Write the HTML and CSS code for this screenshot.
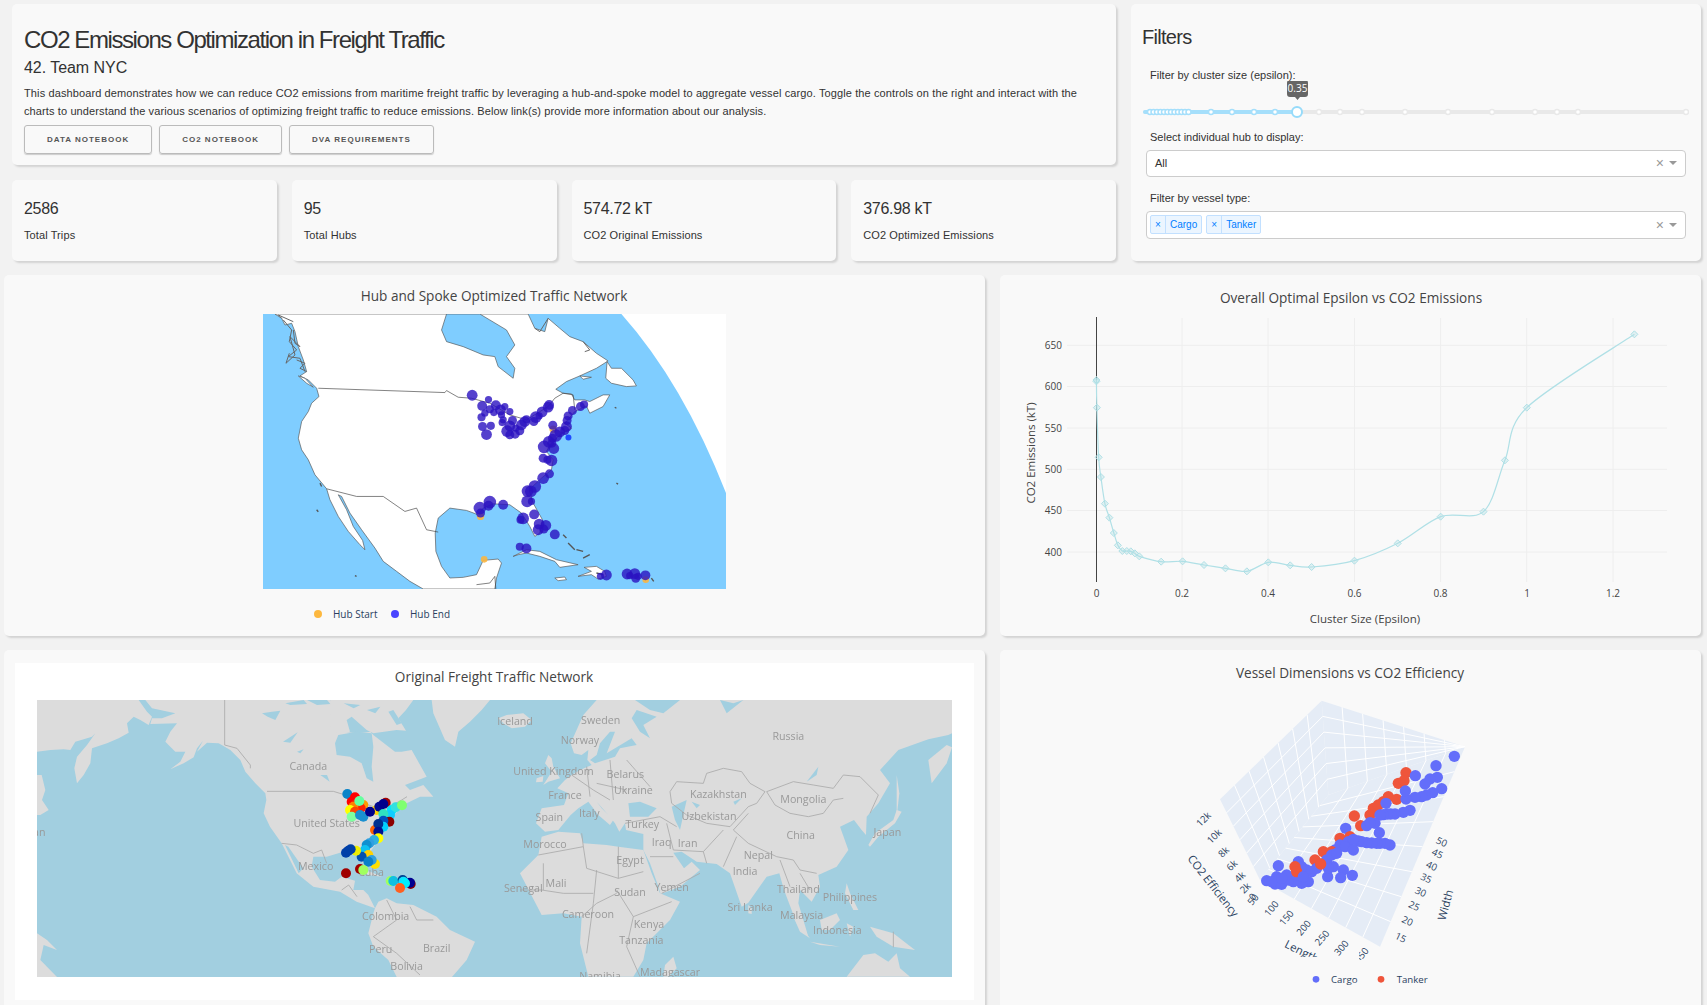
FILE: index.html
```html
<!DOCTYPE html>
<html lang="en">
<head>
  <meta charset="UTF-8">
  <title>CO2 Emissions Optimization in Freight Traffic</title>
  <link rel="stylesheet" href="styles.css">
</head>
<body>
<div class="page">

  <div class="top-row">
    <div class="top-left">
      <div class="card intro">
        <h1>CO2 Emissions Optimization in Freight Traffic</h1>
        <h2>42. Team NYC</h2>
        <p>This dashboard demonstrates how we can reduce CO2 emissions from maritime freight traffic by leveraging a hub-and-spoke model to aggregate vessel cargo. Toggle the controls on the right and interact with the charts to understand the various scenarios of optimizing freight traffic to reduce emissions. Below link(s) provide more information about our analysis.</p>
        <div class="links">
          <a class="btn">Data Notebook</a>
          <a class="btn">CO2 Notebook</a>
          <a class="btn">DVA Requirements</a>
        </div>
      </div>
      <div class="stats">
        <div class="card stat"><div class="stat-num">2586</div><div class="stat-label">Total Trips</div></div>
        <div class="card stat"><div class="stat-num">95</div><div class="stat-label">Total Hubs</div></div>
        <div class="card stat"><div class="stat-num">574.72 kT</div><div class="stat-label">CO2 Original Emissions</div></div>
        <div class="card stat"><div class="stat-num">376.98 kT</div><div class="stat-label">CO2 Optimized Emissions</div></div>
      </div>
    </div>

    <div class="card filters">
      <h3>Filters</h3>
      <label class="filter-label">Filter by cluster size (epsilon):</label>
      <svg class="slider" id="slider" width="546" height="50" viewBox="1143 80 546 50">
        <rect x="1143" y="109" width="546" height="4" rx="2" class="rail"/>
        <rect x="1143" y="109" width="154" height="4" rx="2" class="rail-on"/>
        <g id="sliderMarks"></g>
        <circle cx="1297" cy="111" r="5" class="handle"/>
        <path d="M1290 79h15q3 0 3 3v11q0 3-3 3h-5l-2.500 3-2.500-3h-5q-3 0-3-3v-11q0-3 3-3z" class="tip"/>
        <text x="1297.500" y="91" class="tip-text">0.35</text>
      </svg>
      <label class="filter-label">Select individual hub to display:</label>
      <div class="select">
        <span class="select-value">All</span>
        <span class="select-clear">×</span><span class="select-caret"></span>
      </div>
      <label class="filter-label">Filter by vessel type:</label>
      <div class="select multi">
        <span class="tag"><i>×</i><b>Cargo</b></span>
        <span class="tag"><i>×</i><b>Tanker</b></span>
        <span class="select-value"></span>
        <span class="select-clear">×</span><span class="select-caret"></span>
      </div>
    </div>
  </div>

  <div class="chart-row">
    <div class="card chart">
      <svg width="981" height="361" viewBox="0 0 981 361">
        <text x="490" y="26" class="chart-title">Hub and Spoke Optimized Traffic Network</text>
        <svg x="259" y="39" width="463" height="275" viewBox="39 42 1390 826" preserveAspectRatio="none">
          <rect x="39" y="42" width="1390" height="826" fill="#7fcdff"/>
          <path d="M1115 42Q1300 250 1429 580V42Z" fill="#fff"/>
          <g class="land-one">
            <polygon points="75,42 95,55 105,75 125,70 135,95 145,140 160,180 170,215 150,228 175,240 200,265 207,290 185,310 175,335 155,365 145,415 155,450 175,480 195,525 230,567 240,600 265,650 295,695 330,735 345,750 338,722 310,680 290,630 265,585 275,590 300,640 335,690 375,745 400,785 440,815 480,845 520,868 735,868 740,835 755,790 745,778 700,782 680,825 640,833 600,835 575,800 558,755 556,700 565,655 600,625 650,632 685,645 700,625 730,612 780,615 815,640 840,680 855,710 870,700 878,660 850,610 838,570 875,535 905,510 910,480 890,455 900,435 935,400 965,385 945,370 975,335 1010,318 1020,340 1060,320 1080,285 1060,285 1020,305 1005,300 975,300 965,282 940,280 918,268 950,245 990,228 1040,205 1075,183 1040,160 1000,125 960,110 930,85 895,55 885,95 855,85 835,42"/>
            <polygon points="1072,185 1085,205 1115,205 1150,240 1160,258 1130,260 1085,250 1068,235"/>
            <polygon points="790,770 830,750 870,755 920,780 985,795 930,803 915,785 870,770 830,760 805,765"/>
            <polygon points="1003,803 1040,800 1065,815 1070,830 1045,838 1025,825 985,830 1025,815"/>
            <polygon points="915,835 945,832 950,840 925,843"/>
            <polygon points="145,228 165,235 190,262 170,250"/>
            <polygon points="990,228 1025,232 1000,238"/>
            <polyline class="fjord" points="100,60 125,90 118,125 140,150 115,170 150,175 165,215"/>
            <polyline class="fjord" points="130,90 135,130 150,140 120,110 135,165 108,190 118,160"/>
            <polyline class="fjord" points="140,180 165,190 150,205 170,215"/>
            <polyline class="fjord" points="95,55 85,45 130,65"/>
            <polyline class="fjord" points="1000,125 1020,150 1005,155"/>
            <polyline class="fjord" points="855,85 870,95 895,55"/>
            <polyline class="fjord" points="752,120 770,150 760,145"/>
            <polyline class="isle" points="940,705 950,715"/>
            <polyline class="isle" points="955,730 975,750"/>
            <polyline class="isle" points="980,750 1000,755"/>
            <polyline class="isle" points="1000,775 1020,765"/>
            <polyline class="isle" points="1040,820 1060,825"/>
            <polyline class="isle" points="200,630 205,636"/>
            <polyline class="isle" points="1100,550 1105,553"/>
            <polyline class="isle" points="1095,322 1100,325"/>
            <polyline class="isle" points="315,828 320,830"/>
            <polyline class="isle" points="210,550 215,560"/>
            <polyline class="isle" points="1205,835 1212,845"/>
          </g>
          <path d="M590 42L575 90 590 125 640 140 700 165 735 170 745 200 790 235 795 205 770 170 795 135 770 90 720 60 690 42Z" fill="#7fcdff" stroke="#555" stroke-width="2"/>
          <polyline class="border" points="205,265 585,278 590,272 625,292 665,295 720,310 780,345 830,360 895,320 915,295 940,280 970,285 975,330"/>
          <polyline class="border" points="230,567 320,590 400,590 465,635 500,625 530,690 565,697"/>
          <polyline class="border" points="680,855 720,850 735,830 738,868"/>
          <g id="hubDots"></g>
        </svg>
        <circle cx="314" cy="339" r="4" fill="#fdb83f"/>
        <text x="329" y="342.500" class="legend">Hub Start</text>
        <circle cx="391" cy="339" r="4" fill="#4a45ff"/>
        <text x="406" y="342.500" class="legend">Hub End</text>
      </svg>
    </div>

    <div class="card chart">
      <svg id="lineChart" width="701" height="361" viewBox="0 0 701 361">
        <text x="351" y="28" class="chart-title">Overall Optimal Epsilon vs CO2 Emissions</text>
        <g id="lineGrid"></g>
        <text x="62" y="73.500" class="tick end">650</text>
        <text x="62" y="115" class="tick end">600</text>
        <text x="62" y="156.500" class="tick end">550</text>
        <text x="62" y="198" class="tick end">500</text>
        <text x="62" y="239" class="tick end">450</text>
        <text x="62" y="280.500" class="tick end">400</text>
        <text x="96.500" y="322" class="tick">0</text>
        <text x="182" y="322" class="tick">0.2</text>
        <text x="268" y="322" class="tick">0.4</text>
        <text x="354.500" y="322" class="tick">0.6</text>
        <text x="440.500" y="322" class="tick">0.8</text>
        <text x="527" y="322" class="tick">1</text>
        <text x="613" y="322" class="tick">1.2</text>
        <text x="365" y="348" class="axis-title">Cluster Size (Epsilon)</text>
        <text transform="translate(35 178) rotate(-90)" class="axis-title">CO2 Emissions (kT)</text>
        <path id="linePath" class="curve"/>
        <g id="lineMarks"></g>
      </svg>
    </div>
  </div>

  <div class="chart-row">
    <div class="card chart tall">
      <div class="white-panel">
        <svg width="959" height="337" viewBox="0 0 959 337">
          <text x="479" y="19" class="chart-title">Original Freight Traffic Network</text>
          <svg x="22" y="37" width="915" height="277" viewBox="0 0 2745 831" preserveAspectRatio="none">
            <g class="soft">
              <rect width="2745" height="831" fill="#a2cfe0"/>
              <g class="land-two">
                <!-- asia wrapping round on the left -->
                <polygon points="0,0 305,0 330,35 345,50 335,75 310,60 290,50 270,70 275,98 245,115 210,130 165,145 160,190 140,225 120,250 112,205 120,170 150,135 175,100 165,110 115,125 100,150 80,148 40,150 0,155"/>
                <polygon points="0,225 14,225 25,270 15,300 35,330 10,345 0,345"/>
                <polygon points="0,700 30,720 60,750 20,735 10,780 60,831 0,831"/>
                <!-- north america -->
                <polygon points="325,0 345,25 415,40 375,55 345,55 340,72 420,70 400,95 385,125 415,155 445,155 430,185 400,208 440,190 470,172 480,145 498,122 480,155 510,128 545,130 580,150 610,180 625,215 655,250 685,280 688,300 680,340 699,380 734,430 779,520 829,560 909,575 959,605 1014,625 994,585 979,570 949,570 954,542 914,530 894,545 849,540 824,500 829,470 869,470 919,455 959,465 989,505 989,470 1024,420 1034,390 1059,360 1094,320 1109,310 1149,290 1189,290 1159,255 1119,270 1104,255 1169,230 1124,150 1094,155 1074,155 1009,105 1000,95 960,100 920,95 900,50 880,0"/>
                <!-- baffin -->
                <polygon points="880,0 1129,0 1107,30 1084,55 1107,92 1079,90 1009,100 989,90 944,50 929,60 939,95 909,100 879,90"/>
                <!-- south america -->
                <polygon points="1014,625 1024,605 1049,595 1079,610 1129,615 1199,650 1239,690 1314,725 1289,780 1245,831 1079,831 1054,780 1009,740 994,700 1009,640"/>
                <polygon points="965,510 1000,515 1035,530 995,525"/>
                <polygon points="1184,0 1189,40 1224,120 1254,140 1264,95 1299,65 1334,30 1359,0"/>
                <polygon points="1384,55 1409,45 1459,40 1484,60 1464,80 1424,85 1399,70"/>
                <polygon points="1534,165 1544,175 1549,200 1569,235 1534,245 1519,255 1544,215 1524,190"/>
                <polygon points="1499,235 1519,228 1517,245 1497,247"/>
                <g transform="translate(1389 -120)">
                  <polygon points="290,120 250,165 212,250 222,280 245,285 265,270 262,300 275,315 240,330 215,345 195,360 172,385 205,400 192,435 125,445 108,490 135,515 175,510 212,465 235,445 265,425 295,465 330,495 340,480 305,445 290,425 325,465 345,490 358,515 375,490 378,510 430,522 430,570 450,610 470,665 482,702 540,680 600,630 575,605 552,625 520,578 545,575 590,605 650,612 690,640 725,740 745,728 800,650 838,640 852,690 890,790 925,830 895,730 900,690 935,725 960,680 955,645 1010,620 1045,570 1020,500 1062,480 1085,510 1098,525 1100,470 1135,430 1170,370 1140,330 1195,270 1285,238 1345,225 1356,220 1356,120"/>
                  <polygon points="125,530 175,515 240,520 250,550 320,555 355,560 430,570 455,640 480,700 540,725 510,780 440,850 430,900 400,950 265,950 240,850 245,770 190,760 125,765 60,640 115,585"/>
                  <polygon points="1285,300 1340,255 1356,262 1340,310 1295,370"/>
                  <polygon points="1105,555 1125,520 1180,480 1190,450 1205,455 1185,490 1135,530 1110,560"/>
                  <polygon points="1190,345 1198,400 1190,470"/>
                  <polygon points="1040,670 1050,700 1075,750 1060,750 1035,700"/>
                  <polygon points="960,780 1010,760 1020,780 990,810 965,810"/>
                  <polygon points="880,770 930,835 900,815"/>
                  <polygon points="930,845 1020,860 960,855"/>
                  <polygon points="1040,790 1060,800 1050,830"/>
                  <polygon points="1110,800 1180,820 1245,870 1180,860 1130,830"/>
                  <polygon points="1040,950 1090,885 1125,880 1165,905 1190,880 1200,925 1230,950"/>
                  <polygon points="745,735 755,745 755,762 745,760"/>
                  <polygon points="520,890 530,925 505,950 490,950 495,915"/>
                </g>
              </g>
              <g class="sea-two" transform="translate(1389 -120)">
                <polygon points="300,250 330,215 345,215 320,280 395,235 410,255 360,265 345,290 285,310 270,300 290,285"/>
                <polygon points="385,430 420,425 470,445 445,470 390,470"/>
                <polygon points="515,440 560,420 540,510 525,480"/>
                <polygon points="410,150 470,170 430,195 450,235 420,215 395,175"/>
                <polygon points="405,120 540,120 490,160 450,150"/>
                <polygon points="680,160 730,120 700,130 660,120"/>
                <polygon points="575,425 600,435 590,445"/>
                <polygon points="920,365 955,320 950,345"/>
                <polygon points="700,425 725,415 705,435"/>
              </g>
              <g class="sea-two">
                <polygon points="894,130 904,105 959,95 1004,100 1009,140 1004,200 1009,245 989,235 974,190 939,170 899,165"/>
                <polygon points="1054,35 1069,30 1094,70 1079,75"/>
                <polygon points="920,10 970,15 950,25"/>
                <polygon points="990,30 1030,20 1015,40"/>
                <polygon points="675,40 705,35 730,32 715,60 692,50"/>
                <polygon points="738,125 782,97 760,128"/>
                <polygon points="745,10 800,0 810,12 760,15"/>
                <polygon points="810,0 870,0 880,12 840,15"/>
                <polygon points="780,155 800,148 790,160"/>
                <polygon points="850,225 870,225 878,245"/>
                <polygon points="744,435 785,520 799,505 754,440"/>
              </g>
              <g class="border-two">
                <polyline points="563,0 563,135 600,145 640,195 640,205"/>
                <polyline points="690,274 889,274 925,285 980,310 1040,330 1094,300 1110,290"/>
                <polyline points="734,430 779,435 829,460 854,450 869,490"/>
                <polyline points="914,570 935,555 960,590"/>
                <polyline points="1049,600 1079,660 1009,710 1079,760 1149,825"/>
                <polyline points="1119,620 1139,660 1189,660"/>
                <g transform="translate(1389 -120)">
                  <polyline points="510,395 530,365 610,370 620,340 670,325 725,335 750,370 795,395 770,430 745,440"/>
                  <polyline points="800,395 880,365 940,375 1000,385 1030,345 1080,350 1135,405 1110,460"/>
                  <polyline points="800,395 825,435 870,460 925,470 970,460 1000,420 1030,415"/>
                  <polyline points="745,460 700,510 745,550 830,590 880,600 900,630 950,640"/>
                  <polyline points="510,395 515,430 560,465 620,490 690,500 745,440"/>
                  <polyline points="500,490 520,570 610,575 620,610"/>
                  <polyline points="610,575 670,510"/>
                  <polyline points="670,620 710,530"/>
                  <polyline points="115,585 250,560 245,520"/>
                  <polyline points="250,560 260,625 355,655"/>
                  <polyline points="355,560 355,655 430,635"/>
                  <polyline points="130,610 130,690"/>
                  <polyline points="290,630 280,730"/>
                  <polyline points="350,690 400,770 515,725"/>
                  <polyline points="245,770 290,730 350,700"/>
                  <polyline points="400,770 380,860 420,950"/>
                  <polyline points="280,730 260,880"/>
                  <polyline points="60,690 125,690 190,700 280,700"/>
                  <polyline points="215,345 280,390 330,420"/>
                  <polyline points="260,320 270,410"/>
                  <polyline points="330,300 340,420"/>
                  <polyline points="380,300 450,380"/>
                  <polyline points="290,370 380,390"/>
                  <polyline points="375,490 480,470 530,500"/>
                  <polyline points="450,590 520,590"/>
                  <polyline points="485,700 600,640"/>
                  <polyline points="840,600 870,680"/>
                  <polyline points="900,640 930,690"/>
                  <polyline points="1180,815 1180,862"/>
                </g>
              </g>
              <g class="place">
                <g transform="translate(-51 -120)">
                  <text x="865" y="320">Canada</text>
                  <text x="920" y="493">United States</text>
                  <text x="887" y="622">Mexico</text>
                  <text x="1053" y="638">Cuba</text>
                  <text x="1097" y="770">Colombia</text>
                  <text x="1082" y="870">Peru</text>
                  <text x="1250" y="867">Brazil</text>
                  <text x="1160" y="920">Bolivia</text>
                  <text x="35" y="520">Japan</text>
                </g>
                <text x="1434" y="65">Iceland</text>
                <g transform="translate(1389 -120)">
                  <text x="302" y="183">Sweden</text>
                  <text x="240" y="243">Norway</text>
                  <text x="160" y="336">United Kingdom</text>
                  <text x="376" y="345">Belarus</text>
                  <text x="400" y="393">Ukraine</text>
                  <text x="195" y="408">France</text>
                  <text x="148" y="475">Spain</text>
                  <text x="268" y="463">Italy</text>
                  <text x="427" y="495">Turkey</text>
                  <text x="135" y="554">Morocco</text>
                  <text x="485" y="548">Iraq</text>
                  <text x="563" y="552">Iran</text>
                  <text x="390" y="603">Egypt</text>
                  <text x="655" y="405">Kazakhstan</text>
                  <text x="627" y="470">Uzbekistan</text>
                  <text x="910" y="420">Mongolia</text>
                  <text x="865" y="232">Russia</text>
                  <text x="902" y="527">China</text>
                  <text x="1162" y="520">Japan</text>
                  <text x="775" y="588">Nepal</text>
                  <text x="735" y="636">India</text>
                  <text x="895" y="689">Thailand</text>
                  <text x="1050" y="714">Philippines</text>
                  <text x="905" y="767">Malaysia</text>
                  <text x="750" y="743">Sri Lanka</text>
                  <text x="1012" y="814">Indonesia</text>
                  <text x="70" y="688">Senegal</text>
                  <text x="168" y="672">Mali</text>
                  <text x="390" y="699">Sudan</text>
                  <text x="515" y="683">Yemen</text>
                  <text x="264" y="765">Cameroon</text>
                  <text x="447" y="795">Kenya</text>
                  <text x="424" y="842">Tanzania</text>
                  <text x="510" y="938">Madagascar</text>
                  <text x="300" y="952">Namibia</text>
                </g>
              </g>
              <g id="tripDots" transform="translate(-51 -120)"></g>
            </g>
          </svg>
        </svg>
      </div>
    </div>

    <div class="card chart tall">
      <svg width="701" height="363" viewBox="0 0 701 363">
        <text x="350" y="28" class="chart-title">Vessel Dimensions vs CO2 Efficiency</text>
        <svg x="150" y="30" width="400" height="325" viewBox="0 0 1200 975">
          <g id="cube"></g>
          <g class="tick-3d">
            <text transform="translate(168 425) rotate(-45)">12k</text>
            <text transform="translate(200 476) rotate(-45)">10k</text>
            <text transform="translate(228 523) rotate(-45)">8k</text>
            <text transform="translate(253 563) rotate(-45)">6k</text>
            <text transform="translate(277 598) rotate(-45)">4k</text>
            <text transform="translate(293 631) rotate(-45)">2k</text>
            <text transform="translate(315 658) rotate(-45)">0</text>
            <text transform="translate(317 665) rotate(-50)">50</text>
            <text transform="translate(372 692) rotate(-50)">100</text>
            <text transform="translate(417 720) rotate(-50)">150</text>
            <text transform="translate(469 750) rotate(-50)">200</text>
            <text transform="translate(524 780) rotate(-50)">250</text>
            <text transform="translate(582 810) rotate(-50)">300</text>
            <g clip-path="url(#cutFifty)"><text transform="translate(642 832) rotate(-50)">350</text></g>
            <text transform="translate(748 782) rotate(25)">15</text>
            <text transform="translate(768 732) rotate(25)">20</text>
            <text transform="translate(788 687) rotate(25)">25</text>
            <text transform="translate(808 645) rotate(25)">30</text>
            <text transform="translate(824 604) rotate(25)">35</text>
            <text transform="translate(841 567) rotate(25)">40</text>
            <text transform="translate(858 530) rotate(25)">45</text>
            <text transform="translate(871 495) rotate(25)">50</text>
          </g>
          <clipPath id="cutFifty"><rect x="627" y="780" width="60" height="60"/></clipPath>
          <clipPath id="cutLength"><rect x="370" y="760" width="140" height="70"/></clipPath>
          <g class="title-3d">
            <text transform="translate(180 625) rotate(52)">CO2 Efficiency</text>
            <g clip-path="url(#cutLength)"><text transform="translate(450 825) rotate(27)">Length</text></g>
            <text transform="translate(898 678) rotate(-75)">Width</text>
          </g>
          <g id="shipDots"></g>
          <circle cx="498" cy="898" r="10" fill="#636efa"/>
          <text x="543" y="908" class="legend-3d">Cargo</text>
          <circle cx="693" cy="898" r="10" fill="#ef553b"/>
          <text x="740" y="908" class="legend-3d">Tanker</text>
        </svg>
      </svg>
    </div>
  </div>

</div>
<script src="charts.js"></script>
</body>
</html>
```

FILE: styles.css
```css
* {
  box-sizing: border-box;
}
body {
  margin: 0;
  background-color: #f2f2f2;
  font-family: "Liberation Sans", Arial, sans-serif;
  color: #323232;
}
.page {
  height: 100vh;
  overflow: hidden;
  padding: 4px 6px 0 4px;
}
.card {
  background-color: #f9f9f9;
  border-radius: 5px;
  box-shadow: 2px 2px 2px lightgrey;
}

/* top */
.top-row {
  display: flex;
  gap: 15px;
  padding-left: 8px;
  margin-bottom: 14px;
}
.top-left {
  width: 1104px;
  display: flex;
  flex-direction: column;
  gap: 15px;
}
.intro {
  height: 161px;
  padding: 23px 12px 0;
}
h1 {
  margin: 0;
  font-size: 24px;
  line-height: 26px;
  font-weight: 400;
  letter-spacing: -1.42px;
}
h2 {
  margin: 5px 0 0;
  font-size: 16px;
  line-height: 20px;
  font-weight: 400;
  letter-spacing: -0.05px;
}
.intro p {
  margin: 6px 0 0;
  font-size: 11px;
  line-height: 18px;
  letter-spacing: 0.115px;
}
.links {
  display: flex;
  gap: 7px;
  margin-top: 5px;
}
.btn {
  display: block;
  height: 29px;
  line-height: 27px;
  padding: 0 22px;
  border: 1px solid #bbb;
  border-radius: 3px;
  box-shadow: 0 1px 1px #ccc;
  color: #555;
  font-size: 8px;
  font-weight: 700;
  letter-spacing: 1px;
  text-transform: uppercase;
}
.stats {
  display: grid;
  grid-template-columns: repeat(4, 1fr);
  gap: 15px;
}
.stat {
  height: 81px;
  padding: 19px 12px 0;
}
.stat-num {
  font-size: 16px;
  line-height: 20px;
  letter-spacing: -0.3px;
}
.stat-label {
  margin-top: 9px;
  font-size: 11px;
  line-height: 14px;
  letter-spacing: 0.1px;
}

/* filters */
.filters {
  width: 570px;
  height: 257px;
  padding: 22px 11px 0;
}
h3 {
  margin: 0;
  font-size: 20px;
  line-height: 22px;
  font-weight: 400;
  letter-spacing: -0.7px;
}
.filter-label {
  display: block;
  margin: 0 0 0 8px;
  font-size: 11px;
  line-height: 13px;
}
.filters h3 + .filter-label {
  margin-top: 21px;
}
.slider {
  display: block;
  margin: -1.500px 0 0 1px;
}
.rail {
  fill: #e9e9e9;
}
.rail-on {
  fill: #a5dffb;
}
.mark {
  fill: #fff;
  stroke: #e9e9e9;
  stroke-width: 1.500;
}
.mark-on {
  stroke: #a5dffb;
}
.handle {
  fill: #fff;
  stroke: #96dbfa;
  stroke-width: 2;
}
.tip {
  fill: #666;
}
.tip-text {
  fill: #fff;
  font-size: 10px;
  text-anchor: middle;
}
.select {
  display: flex;
  align-items: center;
  gap: 4px;
  height: 27px;
  margin: 6px 4px 15px;
  padding: 0 8px 0 8px;
  border: 1px solid #ccc;
  border-radius: 4px;
  background-color: #fff;
  font-size: 11px;
}
.select.multi {
  height: 28px;
  padding-left: 3px;
  margin-bottom: 0;
}
.select-value {
  flex: 1;
}
.select-clear {
  color: #999;
  font-size: 14px;
  line-height: 14px;
}
.select-caret {
  width: 0;
  height: 0;
  margin-left: 1px;
  border: 4px solid transparent;
  border-top: 4.500px solid #999;
  border-bottom: 0;
}
.tag {
  display: flex;
  height: 19px;
  border: 1px solid #c2e0ff;
  border-radius: 2px;
  background-color: #ebf5ff;
  color: #007eff;
  font-size: 10px;
  line-height: 17px;
}
.tag i {
  width: 15px;
  border-right: 1px solid #c2e0ff;
  font-style: normal;
  text-align: center;
}
.tag b {
  padding: 0 4px;
  font-weight: 400;
}

/* charts */
.chart-row {
  display: grid;
  grid-template-columns: 981px 701px;
  gap: 15px;
  margin-bottom: 14px;
}
.chart {
  height: 361px;
}
.chart svg {
  display: block;
}
.tall {
  height: 363px;
}
.white-panel {
  margin: 0 11px;
  position: relative;
  top: 13px;
  background-color: #fff;
}
svg text {
  font-family: "Open Sans", Verdana, sans-serif;
}
.chart-title {
  font-size: 13.600px;
  fill: #444;
  text-anchor: middle;
}
.legend {
  font-size: 10px;
  fill: #2a3f5f;
}
.land-one polygon {
  fill: #fff;
  stroke: #555;
  stroke-width: 2;
}
.land-one .fjord {
  fill: none;
  stroke: #666;
  stroke-width: 3;
}
.land-one .isle {
  fill: none;
  stroke: #555;
  stroke-width: 4;
}
.border {
  fill: none;
  stroke: #444;
  stroke-width: 2;
}
.tick {
  font-size: 10px;
  fill: #444;
  text-anchor: middle;
}
.tick.end {
  text-anchor: end;
}
.axis-title {
  font-size: 11.500px;
  fill: #444;
  text-anchor: middle;
}
.grid-line {
  stroke: #eee;
  stroke-width: 1;
}
.zero-line {
  stroke: #444;
  stroke-width: 1;
}
.curve {
  fill: none;
  stroke: #b0e0e6;
  stroke-width: 1.200;
}
.diamond {
  fill: rgba(176, 224, 230, 0.35);
  stroke: #b0e0e6;
  stroke-width: 1;
}
.soft {
  filter: blur(0.4px);
}
.land-two polygon {
  fill: #dcdcdc;
}
.sea-two polygon {
  fill: #a2cfe0;
}
.border-two polyline {
  fill: none;
  stroke: #aaa;
  stroke-width: 2.500;
}
.place text {
  font-size: 32px;
  fill: #999;
  text-anchor: middle;
  dominant-baseline: middle;
}
.wall {
  fill: #e5ecf6;
}
.wall-line {
  stroke: #fff;
  stroke-width: 3;
}
.tick-3d text {
  font-size: 29px;
  fill: #2a3f5f;
  text-anchor: middle;
}
.title-3d text {
  font-size: 34px;
  fill: #2a3f5f;
  text-anchor: middle;
}
.legend-3d {
  font-size: 29px;
  fill: #2a3f5f;
}
```

FILE: charts.js
```js
const NS = "http://www.w3.org/2000/svg";

function add(parent, tag, attrs) {
  const el = document.createElementNS(NS, tag);
  for (const k in attrs) el.setAttribute(k, attrs[k]);
  parent.appendChild(el);
  return el;
}

// slider marks
const marks = document.getElementById("sliderMarks");
const marksOn = [1150, 1153.5, 1157, 1160.5, 1164, 1167.5, 1171, 1174.5, 1178, 1181.5, 1185, 1188.5, 1211, 1232, 1254, 1275];
const marksOff = [1319, 1340, 1362, 1405, 1448, 1492, 1535, 1557, 1578, 1686];
marksOn.forEach(x => add(marks, "circle", { cx: x, cy: 111, r: 2.5, class: "mark mark-on" }));
marksOff.forEach(x => add(marks, "circle", { cx: x, cy: 111, r: 2.5, class: "mark" }));

// hub map: x, y, radius
const hubStart = [[910, 388, 11], [692, 650, 11], [703, 779, 10], [1188, 840, 10]];
const hubEnd = [
  [667, 286, 12], [716, 299, 8], [697, 318, 11], [705, 340, 8], [695, 352, 9], [720, 328, 9], [738, 316, 11], [732, 338, 8],
  [752, 330, 12], [765, 320, 8], [780, 335, 8], [755, 345, 8], [760, 360, 8], [757, 368, 8], [788, 362, 10], [698, 380, 10],
  [723, 378, 9], [710, 404, 12], [780, 378, 12], [772, 394, 13], [780, 405, 10], [796, 403, 10], [810, 393, 10], [798, 385, 8],
  [815, 375, 12], [825, 365, 12], [830, 358, 9], [852, 365, 10], [858, 352, 13], [868, 348, 8], [877, 336, 12], [895, 322, 12],
  [898, 315, 11], [909, 376, 10], [968, 332, 10], [992, 320, 10], [1003, 314, 9], [955, 348, 10], [952, 362, 10], [950, 380, 12],
  [945, 392, 10], [930, 396, 12], [918, 407, 14], [908, 415, 10], [897, 426, 13], [883, 441, 14], [912, 446, 12], [906, 430, 10],
  [880, 475, 10], [893, 480, 9], [905, 482, 13], [899, 522, 10], [880, 535, 13], [855, 560, 14], [843, 575, 13], [833, 574, 13],
  [832, 605, 13], [845, 605, 8], [853, 644, 11], [820, 656, 13], [812, 660, 9], [868, 673, 12], [888, 677, 12], [865, 690, 12],
  [882, 688, 10], [915, 704, 11], [810, 741, 9], [830, 746, 11], [720, 607, 14], [716, 618, 11], [760, 615, 11], [690, 625, 14],
  [692, 640, 10], [1070, 826, 12], [1052, 830, 8], [1132, 823, 12], [1155, 822, 12], [1158, 836, 10], [1140, 828, 8], [1187, 827, 11], [1165, 830, 8]
];
const hubs = document.getElementById("hubDots");
hubStart.forEach(d => add(hubs, "circle", { cx: d[0], cy: d[1], r: d[2], fill: "#f9b642", opacity: 0.9 }));
hubEnd.forEach(d => add(hubs, "circle", { cx: d[0], cy: d[1], r: d[2] * 1.35, fill: "#2a12c0", opacity: 0.8 }));
add(hubs, "circle", { cx: 956, cy: 413, r: 9, fill: "#1f48ff" });

// epsilon line chart, y is from the top of the card
const grid = document.getElementById("lineGrid");
[70.3, 111.5, 153, 194.3, 235.5, 277].forEach(y => add(grid, "line", { x1: 67, x2: 667, y1: y, y2: y, class: "grid-line" }));
[182, 268, 354.5, 440.6, 526.7, 613].forEach(x => add(grid, "line", { x1: x, x2: x, y1: 43, y2: 307, class: "grid-line" }));
add(grid, "line", { x1: 96.5, x2: 96.5, y1: 42, y2: 307, class: "zero-line" });

const curve = [
  [216, 300], [216, 304], [217, 383], [221, 532], [226, 591], [235, 671], [245, 713], [255, 759], [264, 796], [274, 813],
  [284, 813], [293, 814], [302, 820], [312, 829], [361, 845], [409, 844], [457, 855], [505, 865], [553, 874], [601, 847],
  [650, 856], [698, 861], [794, 842], [891, 790], [987, 710], [1083, 695], [1131, 541], [1180, 383], [1421, 163]
].map(p => [p[0] / 2.24, 5 + p[1] / 3]);

let d = "M" + curve[0].join(" ");
for (let i = 0; i < curve.length - 1; i++) {
  const p0 = curve[i - 1] || curve[i];
  const p1 = curve[i];
  const p2 = curve[i + 1];
  const p3 = curve[i + 2] || p2;
  const t = 0.16;
  d += ` C${p1[0] + (p2[0] - p0[0]) * t} ${p1[1] + (p2[1] - p0[1]) * t} ${p2[0] - (p3[0] - p1[0]) * t} ${p2[1] - (p3[1] - p1[1]) * t} ${p2[0]} ${p2[1]}`;
}
document.getElementById("linePath").setAttribute("d", d);
const lineMarks = document.getElementById("lineMarks");
curve.forEach(p => {
  add(lineMarks, "path", { d: `M${p[0]} ${p[1] - 3.5}l3.5 3.5-3.5 3.5-3.5-3.500z`, class: "diamond" });
});

// original traffic map
const trips = [
  [1097, 428, "#a00000"], [982, 402, "#0a84c8"], [1030, 435, "#ff9a00"], [1005, 412, "#ff0000"], [995, 425, "#ff0000"], [1015, 430, "#ff0000"],
  [1022, 445, "#ff2000"], [1005, 435, "#ff2000"],
  [1000, 440, "#ff8000"], [990, 450, "#ffff00"], [1005, 455, "#ff4500"], [1018, 423, "#66ffa0"], [995, 470, "#7fffa0"], [1020, 465, "#1a90d0"],
  [1030, 470, "#1a90d0"], [1070, 450, "#ffd000"], [1050, 455, "#00008b"], [1078, 440, "#00088f"], [1090, 432, "#00008b"], [1115, 450, "#00e5ff"],
  [1127, 442, "#33e0e0"], [1146, 436, "#7fff70"], [1110, 465, "#10ccff"], [1090, 462, "#30e0c0"], [1108, 485, "#8b0000"], [1090, 482, "#0050c0"],
  [1065, 510, "#ff6000"], [1090, 500, "#00d0ff"], [1075, 492, "#003090"], [1075, 515, "#00108f"], [1075, 535, "#ffff00"], [1062, 540, "#30b0e0"],
  [1048, 550, "#30a0e0"], [1040, 555, "#1090d0"], [1035, 570, "#10c0f0"], [1045, 585, "#ffd000"], [1025, 590, "#0050b0"], [1065, 612, "#ffe000"],
  [1055, 600, "#30a0e0"], [1045, 605, "#0a80c8"], [1008, 572, "#eeee00"], [992, 568, "#0040a8"], [985, 572, "#0040a8"], [978, 578, "#0040a8"],
  [1020, 627, "#a00000"], [1030, 630, "#a0ff60"], [978, 640, "#a00000"], [1112, 663, "#a0ff60"], [1120, 663, "#10c0e0"], [1148, 660, "#004090"],
  [1172, 672, "#8b0000"], [1170, 668, "#000090"], [1150, 665, "#10e0ff"], [1155, 670, "#00f0ff"], [1140, 684, "#ff6020"]
];
const tripDots = document.getElementById("tripDots");
trips.forEach(p => add(tripDots, "circle", { cx: p[0], cy: p[1], r: 15, fill: p[2] }));

// 3d scatter box
const cube = document.getElementById("cube");
const cBack = [535, 345], cTop = [515, 62], cLeft = [210, 358], cRight = [945, 200], cFront = [690, 800], cNear = [330, 600];
add(cube, "polygon", { points: [cLeft, cTop, cBack, cNear].join(" "), class: "wall" });
add(cube, "polygon", { points: [cTop, cRight, cBack].join(" "), class: "wall" });
add(cube, "polygon", { points: [cNear, cBack, cRight, cFront].join(" "), class: "wall" });

function mix(a, b, t) {
  return [a[0] + (b[0] - a[0]) * t, a[1] + (b[1] - a[1]) * t];
}
function ladder(a, b, c, e, n) {
  for (let i = 1; i < n; i++) {
    const p = mix(a, b, i / n);
    const q = mix(c, e, i / n);
    add(cube, "line", { x1: p[0], y1: p[1], x2: q[0], y2: q[1], class: "wall-line" });
  }
}
ladder(cNear, cFront, cBack, cRight, 7);
ladder(cFront, cRight, cNear, cBack, 8);
ladder(cLeft, cTop, cNear, cBack, 7);
ladder(cLeft, cNear, cTop, cBack, 6);
ladder(cTop, cRight, cBack, cRight, 7);
ladder(cTop, cBack, cRight, cRight, 6);

const ships = [
  ["r", 768, 278], ["r", 745, 310], ["r", 762, 302], ["b", 913, 229], ["b", 858, 257], ["b", 862, 292], ["b", 840, 297], ["b", 825, 312],
  ["b", 796, 287], ["b", 875, 326], ["b", 848, 338], ["b", 830, 345], ["b", 815, 350], ["b", 795, 352], ["r", 715, 350], ["r", 740, 358], ["r", 700, 365],
  ["b", 768, 357], ["b", 766, 333], ["r", 670, 385], ["r", 685, 375], ["r", 660, 405], ["b", 708, 370], ["b", 780, 391], ["b", 760, 397], ["b", 735, 402],
  ["b", 722, 402], ["b", 712, 402], ["b", 700, 404], ["b", 690, 405], ["r", 613, 408], ["r", 632, 437], ["b", 675, 430], ["b", 650, 437], ["b", 660, 428], ["b", 688, 458], ["b", 587, 445],
  ["r", 570, 475], ["r", 600, 470], ["b", 720, 495], ["b", 705, 490], ["b", 690, 490], ["b", 680, 490], ["b", 665, 489], ["b", 650, 488], ["b", 635, 485], ["b", 625, 483], ["b", 595, 485],
  ["b", 610, 478], ["b", 570, 495], ["b", 585, 500], ["b", 555, 510], ["b", 610, 510], ["r", 545, 515], ["r", 520, 515], ["b", 385, 557], ["b", 445, 545], ["b", 530, 540],
  ["b", 545, 525], ["b", 560, 520], ["r", 495, 540], ["b", 500, 565], ["b", 485, 575], ["b", 470, 570], ["b", 455, 560], ["b", 580, 570], ["b", 607, 586], ["b", 572, 593], ["b", 533, 590],
  ["b", 550, 560], ["b", 535, 565], ["r", 512, 552], ["r", 435, 560], ["b", 475, 605], ["b", 455, 610], ["b", 430, 605], ["b", 395, 613], ["b", 375, 612], ["b", 415, 600],
  ["b", 350, 602], ["b", 380, 590], ["b", 410, 585], ["b", 440, 585], ["r", 440, 575], ["b", 460, 590], ["b", 365, 605], ["b", 395, 595]
];
const shipDots = document.getElementById("shipDots");
ships.forEach(s => add(shipDots, "circle", { cx: s[1], cy: s[2], r: 17, fill: s[0] === "r" ? "#ef553b" : "#636efa" }));
```
